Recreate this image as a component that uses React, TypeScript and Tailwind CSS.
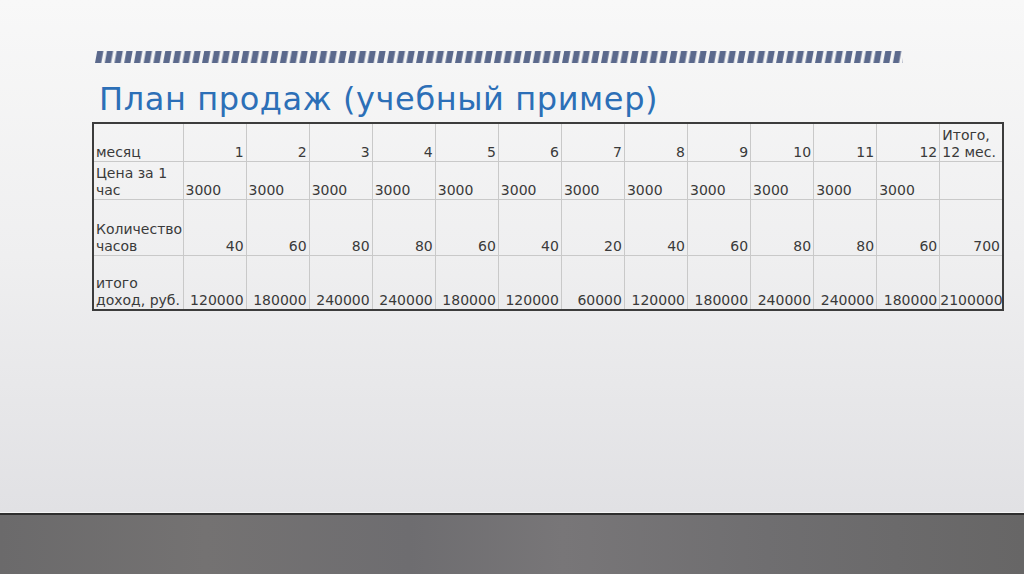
import React from "react";

const months = ["1", "2", "3", "4", "5", "6", "7", "8", "9", "10", "11", "12"];
const hours = ["40", "60", "80", "80", "60", "40", "20", "40", "60", "80", "80", "60"];
const income = [
	"120000",
	"180000",
	"240000",
	"240000",
	"180000",
	"120000",
	"60000",
	"120000",
	"180000",
	"240000",
	"240000",
	"180000",
];

function StripeBar() {
	return (
		<svg width="808" height="12" className="block">
			<defs>
				<pattern id="stripes" width="9.73" height="12" patternUnits="userSpaceOnUse">
					<polygon points="2.2,0 8.4,0 6.2,12 0,12" fill="#5b698c" />
				</pattern>
			</defs>
			<rect width="808" height="12" fill="url(#stripes)" />
		</svg>
	);
}

const cell = "border border-[#c9c9c9] align-bottom px-[2px] leading-[17px] whitespace-nowrap";

export default function App() {
	return (
		<div className="w-[1024px] h-[574px] flex flex-col overflow-hidden font-['DejaVu_Sans',sans-serif]">
			<div className="h-[512px] bg-gradient-to-b from-[#f8f8f8] via-[#efeff0] to-[#e1e1e4] pl-[92px] pt-[51px]">
				<div className="ml-[3px]">
					<StripeBar />
				</div>
				<h1 className="mt-[16px] ml-[7px] text-[32px] leading-[40px] tracking-[0.6px] text-[#2c6fb7] font-normal">
					План продаж (учебный пример)
				</h1>
				<table className="mt-[3px] w-[912px] table-fixed border-collapse border-2 border-[#3c3c3c] text-[14px] text-[#3a3a3a]">
					<colgroup>
						<col className="w-[90px]" />
						{months.map((m) => (
							<col key={m} />
						))}
						<col />
					</colgroup>
					<tbody>
						<tr className="h-[38px]">
							<td className={`${cell} text-left`}>месяц</td>
							{months.map((m) => (
								<td key={m} className={`${cell} text-right`}>
									{m}
								</td>
							))}
							<td className={`${cell} text-left`}>
								Итого,
								<br />
								12 мес.
							</td>
						</tr>
						<tr className="h-[38px]">
							<td className={`${cell} text-left`}>
								Цена за 1
								<br />
								час
							</td>
							{months.map((m) => (
								<td key={m} className={`${cell} text-left`}>
									3000
								</td>
							))}
							<td className={cell}></td>
						</tr>
						<tr className="h-[56px]">
							<td className={`${cell} text-left`}>
								Количество
								<br />
								часов
							</td>
							{hours.map((h, i) => (
								<td key={i} className={`${cell} text-right`}>
									{h}
								</td>
							))}
							<td className={`${cell} text-right`}>700</td>
						</tr>
						<tr className="h-[55px]">
							<td className={`${cell} text-left`}>
								итого
								<br />
								доход, руб.
							</td>
							{income.map((v, i) => (
								<td key={i} className={`${cell} text-right`}>
									{v}
								</td>
							))}
							<td className="border border-[#c9c9c9] align-bottom pl-0 pr-[1px] leading-[17px] whitespace-nowrap text-right">
								2100000
							</td>
						</tr>
					</tbody>
				</table>
			</div>
			<div className="h-[1px] bg-[#f4f4f4]" />
			<div className="h-[2px] bg-[#2e2e2e]" />
			<div className="flex-1 bg-[linear-gradient(90deg,#6b6a6b_0%,#747272_20%,#6e6d70_40%,#787678_55%,#6f6e70_75%,#676666_100%)]" />
		</div>
	);
}
